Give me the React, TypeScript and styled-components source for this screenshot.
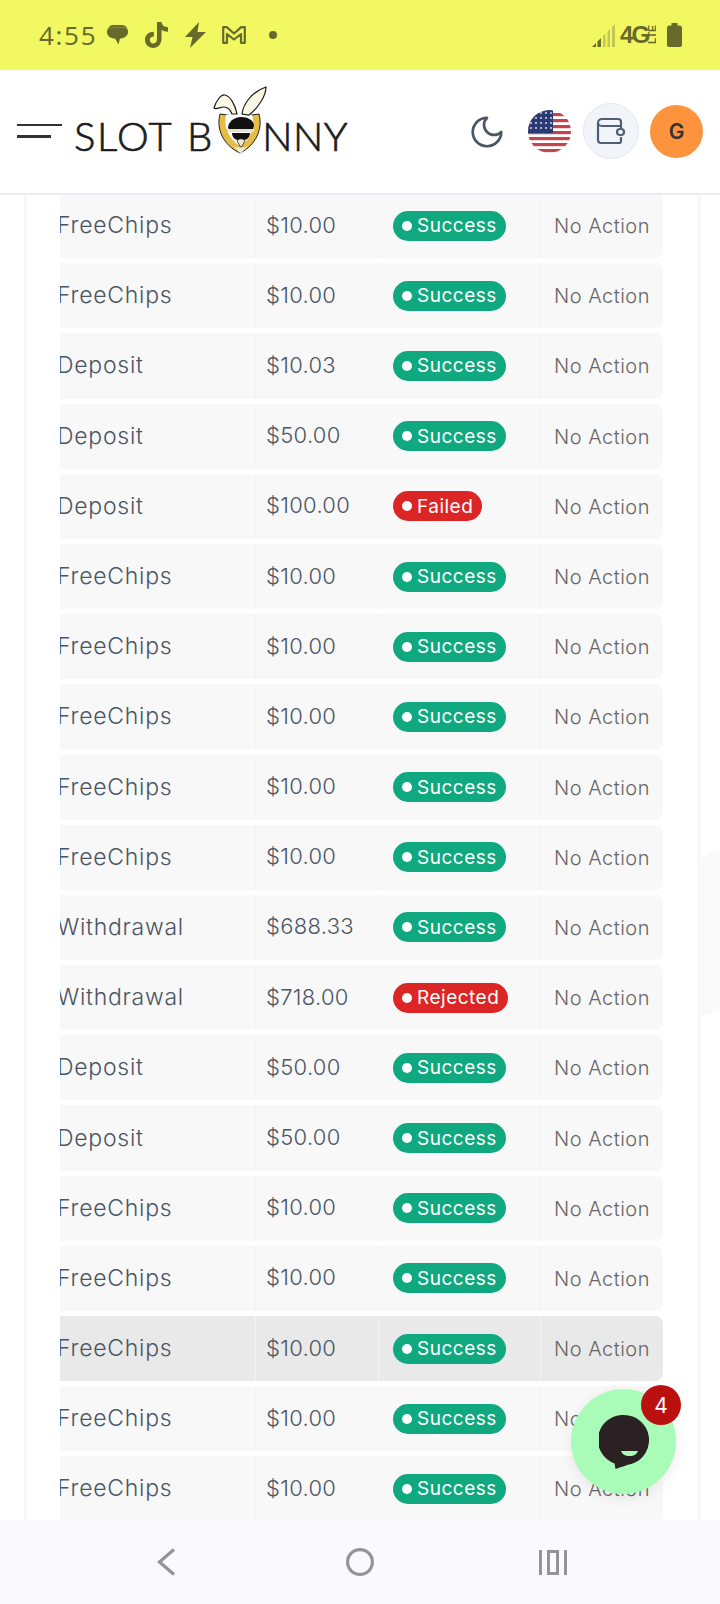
import React from "react";
import styled, { createGlobalStyle } from "styled-components";

const Global = createGlobalStyle`
  html, body {
    margin: 0;
    padding: 0;
    background: #fff;
  }
  * { box-sizing: border-box; }
`;

const Screen = styled.div`
  position: relative;
  width: 720px;
  height: 1604px;
  overflow: hidden;
  display: flex;
  flex-direction: column;
  font-family: "Inter", "Liberation Sans", sans-serif;
  background: #fff;
`;

const StatusBar = styled.div`
  height: 70px;
  flex: none;
  background: #f2f862;
  color: #666a2a;
  display: flex;
  align-items: center;
  justify-content: space-between;
  padding: 0 38px 0 39px;
`;

const StatusGroup = styled.div`
  display: flex;
  align-items: center;
`;

const Clock = styled.span`
  font-size: 26px;
  letter-spacing: 1.7px;
  margin-right: 10px;
  font-family: "Open Sans", sans-serif;
`;

const StatusIcon = styled.svg<{ $gap?: number }>`
  flex: none;
  margin-right: ${(p) => p.$gap ?? 0}px;
`;

const Header = styled.header`
  height: 125px;
  flex: none;
  background: #fff;
  border-bottom: 2px solid #e9ecf1;
  display: flex;
  align-items: center;
  justify-content: space-between;
  padding: 0 17px 1px 17px;
`;

const LogoGroup = styled.div`
  display: flex;
  align-items: center;
`;

const Burger = styled.div`
  width: 45px;
  height: 14px;
  margin-right: 12px;
  margin-top: -1px;
  border-top: 2.5px solid #333;
  position: relative;

  &::after {
    content: "";
    position: absolute;
    left: 0;
    top: 9.5px;
    width: 34px;
    height: 2.5px;
    background: #333;
  }
`;

const Logo = styled.div`
  display: flex;
  align-items: center;
  font-family: "Lato", sans-serif;
  font-size: 40px;
  font-weight: 300;
  color: #1c1c1c;
  -webkit-text-stroke: 0.7px #1c1c1c;
  margin-top: 10px;
  position: relative;
  width: 274px;
  line-height: 1;
`;

const LogoWord = styled.span<{ $gap?: number; $spacing?: number; $push?: boolean }>`
  margin-right: ${(p) => p.$gap ?? 0}px;
  margin-left: ${(p) => (p.$push ? "auto" : "0")};
  letter-spacing: ${(p) => p.$spacing ?? 0}px;
`;

const LogoMark = styled.svg`
  position: absolute;
  left: 139px;
  top: -30px;
`;

const Tools = styled.div`
  display: flex;
  align-items: center;
`;

const Moon = styled.svg`
  margin-right: 22px;
  margin-top: 1px;
`;

const Flag = styled.svg`
  margin-right: 12px;
`;

const WalletButton = styled.div`
  width: 56px;
  height: 56px;
  border-radius: 50%;
  background: #f1f4f9;
  border: 1.5px solid #e5e7eb;
  display: flex;
  align-items: center;
  justify-content: center;
  margin-right: 11px;
`;

const Avatar = styled.div`
  width: 53px;
  height: 53px;
  border-radius: 50%;
  background: #fe933d;
  color: #333;
  font-size: 21px;
  font-weight: 600;
  display: flex;
  align-items: center;
  justify-content: center;
`;

const Main = styled.main`
  position: relative;
  flex: 1;
  min-height: 0;
  overflow: hidden;
  padding: 0 19px 0 24px;
  background: #fff;

  /* faint background shape showing past the panel edge */
  &::after {
    content: "";
    position: absolute;
    right: 0;
    top: 653px;
    width: 23px;
    height: 170px;
    background: linear-gradient(90deg, #f8f8f8, #fbfbfb);
    clip-path: polygon(0 12px, 100% 0, 100% 162px, 0 170px);
  }
`;

const Panel = styled.div`
  height: 100%;
  overflow: hidden;
  border-left: 3px solid #f8f8fa;
  border-right: 4px solid #f8f8fa;
  padding: 0 34px 0 33px;
`;

const Rows = styled.div`
  display: flex;
  flex-direction: column;
  gap: 5px;
  margin-top: -2px;
`;

const Row = styled.div<{ $active?: boolean }>`
  height: 65.2px;
  flex: none;
  display: grid;
  grid-template-columns: 196px 123px 162px 1fr;
  background: ${(p) => (p.$active ? "#e9e9e9" : "#f8f8f8")};
  border-radius: 0 8px 8px 0;
  overflow: hidden;
`;

const Cell = styled.div`
  display: flex;
  align-items: center;
  border-right: 1px solid #f3f3f3;
  color: #4b5563;
  font-size: 22px;
  font-weight: 350;

  &:last-child {
    border-right: none;
  }
`;

const TypeCell = styled(Cell)`
  margin-left: -3px;
  font-size: 23px;
  letter-spacing: 0.75px;
  padding-bottom: 1px;
`;

const AmountCell = styled(Cell)`
  padding-left: 10px;
  padding-bottom: 2px;
  letter-spacing: 0.3px;
`;

const StatusCell = styled(Cell)`
  padding-left: 14px;
`;

const ActionCell = styled(Cell)`
  padding-left: 13px;
  padding-top: 1px;
  color: #666;
  font-size: 20px;
  letter-spacing: 0.5px;
  white-space: nowrap;
`;

const Badge = styled.span<{ $tone: "ok" | "bad" }>`
  display: inline-flex;
  align-items: center;
  height: 30px;
  padding: 0 9px;
  border-radius: 15px;
  background: ${(p) => (p.$tone === "ok" ? "#10a87f" : "#dc2626")};
  color: #fff;
  font-size: 19px;
  font-weight: 400;
  letter-spacing: 0.5px;
  white-space: nowrap;

  &::before {
    content: "";
    width: 10px;
    height: 10px;
    border-radius: 50%;
    background: #fff;
    margin-right: 5px;
  }
`;

const NavBar = styled.nav`
  height: 84px;
  flex: none;
  background: #f9f9fe;
  display: grid;
  grid-template-columns: 189px 193px 1fr;
  align-items: center;
  padding-left: 157px;
  color: #949498;
`;

const ChatBubble = styled.div`
  position: absolute;
  left: 571px;
  top: 1389px;
  width: 105px;
  height: 105px;
  border-radius: 50%;
  background: #a9fcb7;
  box-shadow: 0 4px 14px rgba(0, 0, 0, 0.08);
  display: flex;
  align-items: center;
  justify-content: center;
`;

const ChatCount = styled.span`
  position: absolute;
  left: 70px;
  top: -4px;
  width: 40px;
  height: 40px;
  border-radius: 50%;
  background: #bb1010;
  color: #fff;
  font-size: 21px;
  display: flex;
  align-items: center;
  justify-content: center;
`;

type Tx = [string, string, "Success" | "Failed" | "Rejected"];

const rows: Tx[] = [
  ["FreeChips", "$10.00", "Success"],
  ["FreeChips", "$10.00", "Success"],
  ["Deposit", "$10.03", "Success"],
  ["Deposit", "$50.00", "Success"],
  ["Deposit", "$100.00", "Failed"],
  ["FreeChips", "$10.00", "Success"],
  ["FreeChips", "$10.00", "Success"],
  ["FreeChips", "$10.00", "Success"],
  ["FreeChips", "$10.00", "Success"],
  ["FreeChips", "$10.00", "Success"],
  ["Withdrawal", "$688.33", "Success"],
  ["Withdrawal", "$718.00", "Rejected"],
  ["Deposit", "$50.00", "Success"],
  ["Deposit", "$50.00", "Success"],
  ["FreeChips", "$10.00", "Success"],
  ["FreeChips", "$10.00", "Success"],
  ["FreeChips", "$10.00", "Success"],
  ["FreeChips", "$10.00", "Success"],
  ["FreeChips", "$10.00", "Success"],
];

const FlagIcon = () => (
  <Flag width="43" height="43" viewBox="0 0 43 43">
    <defs>
      <clipPath id="flagClip">
        <circle cx="21.5" cy="21.5" r="21.5" />
      </clipPath>
    </defs>
    <g clipPath="url(#flagClip)">
      <rect width="43" height="43" fill="#fff" />
      {[3, 9, 15, 21, 27, 33, 39].map((y) => (
        <rect key={y} x="0" y={y} width="43" height="3.2" fill="#c5444f" />
      ))}
      <rect width="25" height="23" fill="#2b3a75" />
      {[3, 8, 13, 18].map((y) =>
        [3, 8, 13, 18, 23].map((x) => <circle key={`${x}-${y}`} cx={x} cy={y} r="0.9" fill="#e8eaf4" />)
      )}
    </g>
  </Flag>
);

const BunnyMark = () => (
  <LogoMark width="54" height="68" viewBox="0 0 54 68">
    {/* shield */}
    <path d="M7 28c-4 15 3 31 20 39 16-8 23-24 19-39l-7 1H14z" fill="#e4bd45" stroke="#1c1c1c" strokeWidth="1" />
    <path d="M13 29c6-2 21-2 26 0 4 12-2 25-12 31-10-6-17-19-14-31z" fill="#fff" />
    {/* ears */}
    <path d="M1 22C3 15 8 8 12 9c5 1 10 9 12 19h-5c-2-5-5-7-8-7-4 0-8 3-10 1z" fill="#fbf8e6" stroke="#1c1c1c" strokeWidth="1.2" />
    <path d="M29 28c1-9 9-22 24-27 0 9-8 21-17 28z" fill="#fbf8e6" stroke="#1c1c1c" strokeWidth="1.2" />
    {/* hair, band and glasses */}
    <path d="M15 42c0-6 6-11 13-11 7 0 12 3 13 8l-1 4H16z" fill="#111" />
    <path d="M14 43h27v3H14z" fill="#e9e2c8" />
    <path d="M19 47h18c0 4-3 7-6 7h-6c-3 0-6-3-6-7z" fill="#111" />
    {/* snout */}
    <path d="M24 55c2-3 6-3 8 0l-3.500 6h-1z" fill="#f5e6cf" stroke="#1c1c1c" strokeWidth="0.8" />
    <path d="M20 60c3 2 12 2 15 0l-7 7h-1z" fill="#f3e8d2" />
  </LogoMark>
);

const App: React.FC = () => {
  return (
    <>
      <Global />
      <Screen>
        <StatusBar>
          <StatusGroup>
            <Clock>4:55</Clock>
            <StatusIcon $gap={17} width="21" height="22" viewBox="0 0 21 22" fill="#666a2a">
              <path d="M6 1h8c3 0 6 1.500 6 3.500 1 1 1 2 1 3.500 0 4-4 6.500-8 6.500l-1.500 6-3.500-6C3.500 14.500 0 12 0 8c0-2 .5-3 1.500-4C2 2 4 1 6 1z" />
              <path d="M1 5c2-2.500 16-2.500 19 0" fill="none" stroke="#8a8f36" strokeWidth="1" />
            </StatusIcon>
            <StatusIcon $gap={17} width="23" height="26" viewBox="0 0 23 26" fill="#666a2a">
              <path d="M12 0h4.500c.3 3 2.400 5 6.500 5.300v4.500c-2.500 0-4.800-.7-6.500-2V17c0 5-3.700 9-8.300 9S0 22.500 0 17.800 3.700 9.800 8.800 9.800v4.700c-2.400 0-4 1.500-4 3.400s1.500 3.500 3.400 3.500 3.800-1.500 3.800-4z" />
            </StatusIcon>
            <StatusIcon $gap={16} width="21" height="26" viewBox="0 0 21 26" fill="#666a2a">
              <path d="M14 0 0 15h7.500L5 26l16-16h-8.500z" />
            </StatusIcon>
            <StatusIcon $gap={23} width="24" height="18" viewBox="0 0 24 18" fill="none" stroke="#666a2a" strokeWidth="2.2" strokeLinejoin="round">
              <path d="M1.200 16.800V1.200h3.600L12 7.500l7.200-6.300h3.600v15.600h-3.800V8L12 13.500 5 8v8.800z" />
            </StatusIcon>
            <StatusIcon width="8" height="8" viewBox="0 0 8 8" fill="#666a2a">
              <circle cx="4" cy="4" r="4" />
            </StatusIcon>
          </StatusGroup>
          <StatusGroup>
            <StatusIcon $gap={5} width="23" height="23" viewBox="0 0 23 23">
              <path d="M0 23 4 19v4z" fill="#666a2a" />
              <path d="M5.500 17.500 9 14v9H5.500z" fill="#666a2a" />
              <path d="M11 12l2.500-2.500V23H11zM15.500 7.500 18 5v18h-2.500zM20 3l3-3v23h-3z" fill="#c2c654" />
            </StatusIcon>
            <StatusIcon $gap={11} width="36" height="30" viewBox="0 0 36 30">
              <text x="0" y="23" fontFamily="Liberation Sans" fontWeight="700" fontSize="24" fill="#666a2a" letterSpacing="-1.8">4G</text>
              <text x="0" y="0" transform="translate(36 24) rotate(-90)" fontFamily="Liberation Sans" fontWeight="700" fontSize="10.5" fill="#666a2a">LTE</text>
            </StatusIcon>
            <StatusIcon width="15" height="24" viewBox="0 0 15 24" fill="#666a2a">
              <path d="M4.500 0h6v2.500h2c1.300 0 2.500 1 2.500 2.500v17c0 1.200-1 2-2 2H2c-1 0-2-.8-2-2V5c0-1.500 1.200-2.500 2.500-2.500h2z" />
            </StatusIcon>
          </StatusGroup>
        </StatusBar>

        <Header>
          <LogoGroup>
            <Burger />
            <Logo>
              <LogoWord $gap={14} $spacing={1.5}>SLOT</LogoWord>
              <LogoWord>B</LogoWord>
              <BunnyMark />
              <LogoWord $push $spacing={0.5}>NNY</LogoWord>
            </Logo>
          </LogoGroup>
          <Tools>
            <Moon width="38" height="38" viewBox="0 0 24 24" fill="none" stroke="#4b5563" strokeWidth="1.7" strokeLinecap="round" strokeLinejoin="round">
              <path d="M12 3a6 6 0 0 0 9 9 9 9 0 1 1-9-9z" />
            </Moon>
            <FlagIcon />
            <WalletButton>
              <svg width="30" height="30" viewBox="0 0 30 30" fill="none" stroke="#4f5f75" strokeWidth="2.2" strokeLinejoin="round">
                <path d="M25 10V6c0-1.500-1-3-3-3H6C4 3 2 4.500 2 7v17c0 2 1.500 3 3 3h18c1.500 0 2-1 2-2v-4" />
                <path d="M2 8c1 1.500 2.500 2 4 2h19v4" />
                <rect x="21" y="13" width="7" height="6" rx="3" />
              </svg>
            </WalletButton>
            <Avatar>G</Avatar>
          </Tools>
        </Header>

        <Main>
          <Panel>
            <Rows>
              {rows.map(([type, amount, status], i) => (
                <Row key={i} $active={i === 16}>
                  <TypeCell>{type}</TypeCell>
                  <AmountCell>{amount}</AmountCell>
                  <StatusCell>
                    <Badge $tone={status === "Success" ? "ok" : "bad"}>{status}</Badge>
                  </StatusCell>
                  <ActionCell>No Action</ActionCell>
                </Row>
              ))}
            </Rows>
          </Panel>
        </Main>

        <NavBar>
          <svg width="18" height="28" viewBox="0 0 18 28" fill="none" stroke="currentColor" strokeWidth="3.2">
            <path d="M17 1.500 2.500 14 17 26.500" />
          </svg>
          <svg width="28" height="28" viewBox="0 0 28 28" fill="none" stroke="currentColor" strokeWidth="3.2">
            <circle cx="14" cy="14" r="12.400" />
          </svg>
          <svg width="28" height="25" viewBox="0 0 28 25" fill="currentColor">
            <path d="M0 0h3v25H0zM25 0h3v25h-3zM8 0h12v25H8zm3 3v19h6V3z" fillRule="evenodd" />
          </svg>
        </NavBar>

        <ChatBubble>
          <svg width="50" height="54" viewBox="0 0 50 54">
            <path d="M25 0a25 25 0 0 1 8 48.700C28 50 22 52 16.500 54l-1-5.500A25 25 0 0 1 25 0z" fill="#2b2122" />
            <path d="M22 36h17c-1 3-4 5-8.500 5S23 39 22 36z" fill="#a9fcb7" />
          </svg>
          <ChatCount>4</ChatCount>
        </ChatBubble>
      </Screen>
    </>
  );
};

export default App;
